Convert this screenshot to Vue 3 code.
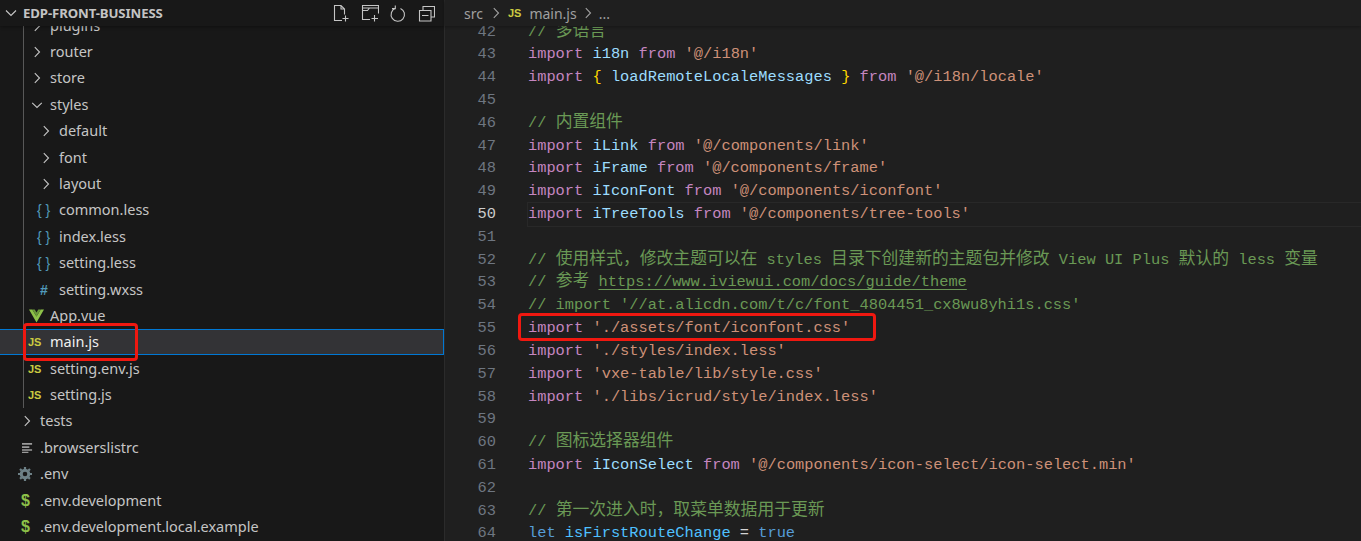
<script setup>
const tree = [
  { n: 'plugins', d: 1, t: 'closed' },
  { n: 'router', d: 1, t: 'closed' },
  { n: 'store', d: 1, t: 'closed' },
  { n: 'styles', d: 1, t: 'open' },
  { n: 'default', d: 2, t: 'closed' },
  { n: 'font', d: 2, t: 'closed' },
  { n: 'layout', d: 2, t: 'closed' },
  { n: 'common.less', d: 2, t: 'less' },
  { n: 'index.less', d: 2, t: 'less' },
  { n: 'setting.less', d: 2, t: 'less' },
  { n: 'setting.wxss', d: 2, t: 'hash' },
  { n: 'App.vue', d: 1, t: 'vue' },
  { n: 'main.js', d: 1, t: 'js', sel: true },
  { n: 'setting.env.js', d: 1, t: 'js' },
  { n: 'setting.js', d: 1, t: 'js' },
  { n: 'tests', d: 0, t: 'closed' },
  { n: '.browserslistrc', d: 0, t: 'lines' },
  { n: '.env', d: 0, t: 'gear' },
  { n: '.env.development', d: 0, t: 'dollar' },
  { n: '.env.development.local.example', d: 0, t: 'dollar' },
]

const imp = (name, path) => [['k', 'import'], ['', ' '], ['v', name], ['', ' '], ['k', 'from'], ['', ' '], ['s', `'${path}'`]]
const bare = (path) => [['k', 'import'], ['', ' '], ['s', `'${path}'`]]

const code = [
  { no: 42, c: [['c', '// '], ['c z', '多语言']] },
  { no: 43, c: imp('i18n', '@/i18n') },
  { no: 44, c: [['k', 'import'], ['', ' '], ['b', '{'], ['', ' '], ['v', 'loadRemoteLocaleMessages'], ['', ' '], ['b', '}'], ['', ' '], ['k', 'from'], ['', ' '], ['s', "'@/i18n/locale'"]] },
  { no: 45, c: [] },
  { no: 46, c: [['c', '// '], ['c z', '内置组件']] },
  { no: 47, c: imp('iLink', '@/components/link') },
  { no: 48, c: imp('iFrame', '@/components/frame') },
  { no: 49, c: imp('iIconFont', '@/components/iconfont') },
  { no: 50, active: true, c: imp('iTreeTools', '@/components/tree-tools') },
  { no: 51, c: [] },
  { no: 52, c: [['c', '// '], ['c z', '使用样式，修改主题可以在'], ['c', ' styles '], ['c z', '目录下创建新的主题包并修改'], ['c', ' View UI Plus '], ['c z', '默认的'], ['c', ' less '], ['c z', '变量']] },
  { no: 53, c: [['c', '// '], ['c z', '参考'], ['c', ' '], ['c u', 'https://www.iviewui.com/docs/guide/theme']] },
  { no: 54, c: [['c', "// import '//at.alicdn.com/t/c/font_4804451_cx8wu8yhi1s.css'"]] },
  { no: 55, c: bare('./assets/font/iconfont.css') },
  { no: 56, c: bare('./styles/index.less') },
  { no: 57, c: bare('vxe-table/lib/style.css') },
  { no: 58, c: bare('./libs/icrud/style/index.less') },
  { no: 59, c: [] },
  { no: 60, c: [['c', '// '], ['c z', '图标选择器组件']] },
  { no: 61, c: imp('iIconSelect', '@/components/icon-select/icon-select.min') },
  { no: 62, c: [] },
  { no: 63, c: [['c', '// '], ['c z', '第一次进入时，取菜单数据用于更新']] },
  { no: 64, c: [['d', 'let'], ['', ' '], ['w', 'isFirstRouteChange'], ['', ' = '], ['d', 'true']] },
]
</script>

<template>
  <div class="app">
    <aside class="side">
      <header class="side-head">
        <svg class="head-chev" viewBox="0 0 12 12"><path d="M1 3.500 6 8.500l5-5" /></svg>
        <span class="title">EDP-FRONT-BUSINESS</span>
        <div class="actions">
          <svg viewBox="0 0 18 18"><path d="M9 16.500H1.500v-15h6.500l3.500 3.500v5.500M8 1.500v3.500h3.500M12.500 11.500v6M9.500 14.500h6" /></svg>
          <svg viewBox="0 0 18 18"><path d="M9 15.500H1.500v-14h16v8M1.500 4h16M1.500 6.500h5l2-2.500M13.500 11v6.500M10.500 14.500h6.500" /></svg>
          <svg viewBox="0 0 18 18"><path d="M11.500 3.800a6.700 6.700 0 1 1-4.900-.2M6.300 .8v3.200H3" transform="translate(0 .6)" /></svg>
          <svg viewBox="0 0 18 18"><path d="M6 6V2.500h11.500V13H14M2.500 6.500H14V17H2.500zM5 11.500h6.500" /></svg>
        </div>
      </header>
      <div class="tree-clip">
        <div class="tree">
          <span class="guide"></span>
          <div v-for="r in tree" :key="r.n" class="row" :class="[`d${r.d}`, { sel: r.sel }]">
            <span class="ico">
              <svg v-if="r.t === 'closed'" class="chev" viewBox="0 0 12 12"><path d="M3.800 1.200 8.500 6l-4.700 4.800" /></svg>
              <svg v-else-if="r.t === 'open'" class="chev" viewBox="0 0 12 12"><path d="M1.200 3.800 6 8.500l4.800-4.700" /></svg>
              <span v-else-if="r.t === 'less'" class="glyph blue">{ }</span>
              <span v-else-if="r.t === 'hash'" class="glyph blue hash">#</span>
              <span v-else-if="r.t === 'js'" class="glyph js">JS</span>
              <span v-else-if="r.t === 'dollar'" class="glyph dollar">$</span>
              <svg v-else-if="r.t === 'vue'" class="file-svg" viewBox="0 0 16 14"><path d="M0 0h3.500L8 7.600 12.500 0H16L8 14z" fill="#8dc149" /><path d="M3.500 0h2.600L8 3.300 9.900 0h2.600L8 7.600z" fill="#6a9a3a" /></svg>
              <svg v-else-if="r.t === 'lines'" class="file-svg" viewBox="0 0 12 12"><path d="M0 1h11v2H0zM0 4.500h8v2H0zM0 8h11v1.500H0zM0 10.500h7V12H0z" fill="#9a9a9a" /></svg>
              <svg v-else-if="r.t === 'gear'" class="file-svg gear" viewBox="0 0 14 14"><circle cx="7" cy="7" r="3.800" fill="none" stroke="#6d8086" stroke-width="3" /><path d="M7 0v14M0 7h14M2 2l10 10M12 2 2 12" stroke="#6d8086" stroke-width="2.200" stroke-dasharray="2.200 9.600 2.200" /></svg>
            </span>
            <span class="name">{{ r.n }}</span>
          </div>
        </div>
      </div>
      <span class="mark mark-side"></span>
    </aside>

    <main class="editor">
      <nav class="crumbs">
        <span>src</span>
        <svg viewBox="0 0 12 12"><path d="M3.800 1.200 8.500 6l-4.700 4.800" /></svg>
        <span class="crumb-js">JS</span>
        <span>main.js</span>
        <svg viewBox="0 0 12 12"><path d="M3.800 1.200 8.500 6l-4.700 4.800" /></svg>
        <span>...</span>
      </nav>
      <div class="code-clip">
        <div class="code">
          <div v-for="l in code" :key="l.no" class="line" :class="{ active: l.active }">
            <span class="no">{{ l.no }}</span>
            <span class="txt"><span v-for="(t, i) in l.c" :key="i" :class="t[0]">{{ t[1] }}</span></span>
          </div>
        </div>
      </div>
      <span class="mark mark-code"></span>
    </main>
  </div>
</template>

<style>
html, body { margin: 0; background: #1f1f1f; overflow: hidden; }
</style>

<style scoped>
.app {
  display: flex;
  width: 1361px;
  height: 541px;
  overflow: hidden;
  position: relative;
  font-family: "Noto Sans", sans-serif;
}

.side {
  width: 444px;
  flex: none;
  background: #181818;
  border-right: 1px solid #2b2b2b;
  display: flex;
  flex-direction: column;
}
.side-head {
  height: 26px;
  flex: none;
  display: flex;
  align-items: center;
  position: relative;
  z-index: 2;
  box-shadow: 0 1px 3px rgba(0, 0, 0, .35);
  background: #181818;
}
.head-chev { width: 12px; height: 12px; margin-left: 5px; fill: none; stroke: #c8c8c8; stroke-width: 1.1; }
.title {
  margin-left: 6px;
  font-size: 13.200px;
  font-weight: 700;
  color: #c4c4c4;
  letter-spacing: -.1px;
}
.actions {
  margin-left: auto;
  margin-right: 9px;
  display: flex;
  gap: 10px;
}
.actions svg { width: 18px; height: 18px; fill: none; stroke: #c5c5c5; stroke-width: 1.1; }

.tree-clip { flex: 1; overflow: hidden; }
.tree { margin-top: -13.600px; position: relative; }
.guide {
  position: absolute;
  left: 23px;
  top: 0;
  height: 396px;
  width: 1px;
  background: #585858;
  z-index: 1;
}
.row {
  height: 26.400px;
  display: flex;
  align-items: center;
  box-sizing: border-box;
  position: relative;
  font-size: 14.500px;
  color: #c5c5c5;
  white-space: nowrap;
}
.row.d0 { padding-left: 18px; }
.row.d1 { padding-left: 28px; }
.row.d2 { padding-left: 37px; }
.row.sel {
  background: #333336;
  color: #f0f0f0;
  border-top: 1px solid #0078d4;
  border-bottom: 1px solid #0078d4;
  border-right: 1px solid #0078d4;
}
.ico {
  width: 22px;
  height: 16px;
  flex: none;
  display: flex;
  align-items: center;
  justify-content: flex-start;
}
.name { line-height: 20px; position: relative; top: -1px; }
.chev { width: 12px; height: 12px; margin-left: 3px; fill: none; stroke: #c5c5c5; stroke-width: 1.100; }
.file-svg { width: 15px; height: 14px; margin-left: 1px; }
.row.d0 .file-svg { width: 11px; height: 11px; margin-left: 4px; }
.row.d0 .file-svg.gear { width: 14px; height: 14px; margin-left: 0; }
.glyph { font-family: "Liberation Sans", sans-serif; font-weight: 700; line-height: 16px; }
.blue { color: #519aba; font-size: 14px; font-weight: 400; }
.hash { font-weight: 700; margin-left: 3px; }
.js { color: #cbcb41; font-size: 11px; margin-left: 0; }
.dollar { color: #8dc149; font-size: 16px; margin-left: 3px; }

.mark {
  position: absolute;
  box-sizing: border-box;
  border: 3px solid #f01810;
  border-radius: 4px;
  z-index: 5;
}
.mark-side { left: 23px; top: 323px; width: 115px; height: 38px; }
.mark-code { left: 518px; top: 313px; width: 358px; height: 28px; }

.editor {
  flex: 1;
  min-width: 0;
  background: #1f1f1f;
  display: flex;
  flex-direction: column;
}
.crumbs {
  height: 26px;
  flex: none;
  display: flex;
  align-items: center;
  padding-left: 19px;
  font-size: 14px;
  color: #a0a0a0;
  position: relative;
  z-index: 2;
  background: #1f1f1f;
  box-shadow: 0 1px 3px rgba(0, 0, 0, .3);
}
.crumbs svg { width: 12px; height: 12px; margin: 0 6px 0 7px; fill: none; stroke: #a0a0a0; stroke-width: 1.100; }
.crumbs svg:last-of-type { margin: 0 5px 0 5px; }
.crumb-js {
  font-family: "Liberation Sans", sans-serif;
  font-size: 11px;
  font-weight: 700;
  color: #cbcb41;
  margin: 0 8px 0 0;
}

.code-clip { flex: 1; overflow: hidden; }
.code {
  margin-top: -5.500px;
  font-family: "Liberation Mono", "Noto Sans CJK SC", monospace;
  font-size: 15.350px;
  color: #d4d4d4;
}
.line {
  height: 22.820px;
  line-height: 22.820px;
  display: flex;
  white-space: pre;
  box-sizing: border-box;
}
.no {
  width: 51px;
  text-align: right;
  flex: none;
  color: #6e7681;
}
.txt { margin-left: 32px; flex: 1; }
.line.active .no { color: #cccccc; }
.line.active .txt { box-shadow: 0 0 0 1px #282828; }
.k { color: #c586c0; }
.v { color: #9cdcfe; }
.s { color: #ce9178; }
.c { color: #6a9955; }
.b { color: #ffd700; }
.d { color: #569cd6; }
.w { color: #4fc1ff; }
.u { text-decoration: underline; text-underline-offset: 3px; }
.z { font-family: "Noto Sans CJK SC", sans-serif; font-size: 16.820px; line-height: 1; }
</style>
